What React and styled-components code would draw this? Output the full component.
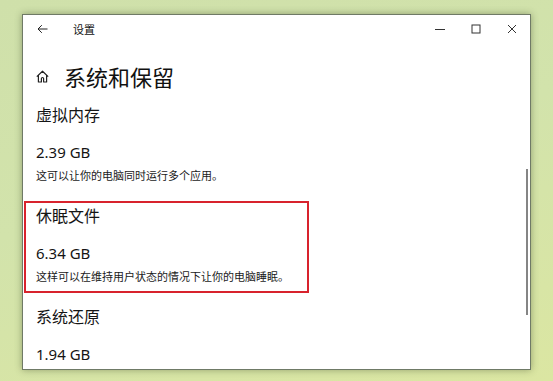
import React from "react"
import styled, { createGlobalStyle } from "styled-components"

const GlobalStyle = createGlobalStyle`
  html, body { margin: 0; padding: 0; }
  body {
    font-family: "Noto Sans", "Noto Sans CJK SC", sans-serif;
    color: #1b1b1b;
  }
`

const Desktop = styled.div`
  width: 553px;
  height: 381px;
  box-sizing: border-box;
  padding: 14px 0 0 22px;
  overflow: hidden;
  background: linear-gradient(165deg, #cfe0aa 0%, #d2e3ab 45%, #dbe6a2 100%);
`

const Window = styled.div`
  position: relative;
  width: 509px;
  height: 356px;
  box-sizing: border-box;
  border: 1px solid #6f7a66;
  background: #fff;
  box-shadow: 0 0 7px rgba(60, 70, 40, 0.45);
  display: flex;
  flex-direction: column;
  overflow: hidden;
`

const TitleBar = styled.div`
  height: 28px;
  flex-shrink: 0;
  display: flex;
  align-items: center;
  padding-left: 14px;
`

const BackBtn = styled.div`
  width: 11px;
  height: 10px;
  display: flex;
  color: #222;
`

const AppName = styled.span`
  margin-left: 25px;
  font-size: 11px;
  font-family: "Noto Sans CJK SC", sans-serif;
  color: #111;
`

const Controls = styled.div`
  margin-left: auto;
  display: flex;
  height: 100%;
`

const CtrlBtn = styled.div`
  width: 36px;
  height: 100%;
  display: flex;
  align-items: center;
  justify-content: center;
  color: #333;
`

const Header = styled.div`
  display: flex;
  align-items: center;
  margin-top: 18px;
  padding-left: 13px;
  height: 30px;
`

const HomeIcon = styled.div`
  width: 13px;
  height: 13px;
  display: flex;
  color: #222;
`

const PageTitle = styled.h1`
  margin: 0 0 0 15px;
  font-size: 22px;
  font-weight: 400;
  line-height: 30px;
  font-family: "Noto Sans CJK SC", sans-serif;
  color: #111;
`

const Sections = styled.div`
  margin-top: 9px;
  display: flex;
  flex-direction: column;
  gap: 9px;
`

const Section = styled.div`
  width: 285px;
  box-sizing: border-box;
  margin-left: 1px;
  padding: 1px 0 7px 10px;
  border: 2px solid ${(p) => (p.$highlight ? "#d8232d" : "transparent")};
`

const Heading = styled.div`
  font-size: 16px;
  line-height: 22px;
  font-family: "Noto Sans CJK SC", sans-serif;
  color: #151515;
`

const Value = styled.div`
  margin-top: 17px;
  font-size: 15px;
  line-height: 20px;
  color: #151515;
`

const Desc = styled.div`
  margin-top: 5px;
  font-size: 11px;
  line-height: 16px;
  font-family: "Noto Sans CJK SC", sans-serif;
  color: #1a1a1a;
  white-space: nowrap;
`

const ScrollThumb = styled.div`
  position: absolute;
  right: 2px;
  top: 154px;
  width: 2px;
  height: 146px;
  background: #858585;
`

const items = [
  { title: "虚拟内存", size: "2.39 GB", desc: "这可以让你的电脑同时运行多个应用。" },
  { title: "休眠文件", size: "6.34 GB", desc: "这样可以在维持用户状态的情况下让你的电脑睡眠。", highlight: true },
  { title: "系统还原", size: "1.94 GB" },
]

export default function App() {
  return (
    <>
      <GlobalStyle />
      <Desktop>
        <Window>
          <TitleBar>
            <BackBtn>
              <svg width="11" height="10" viewBox="0 0 11 10" fill="none" stroke="currentColor" strokeWidth="1">
                <path d="M10.5 5H1M4.8 1.2L1 5l3.8 3.8" />
              </svg>
            </BackBtn>
            <AppName>设置</AppName>
            <Controls>
              <CtrlBtn>
                <svg width="10" height="10" viewBox="0 0 10 10" stroke="currentColor" strokeWidth="1">
                  <path d="M0 5.5h10" />
                </svg>
              </CtrlBtn>
              <CtrlBtn>
                <svg width="10" height="10" viewBox="0 0 10 10" fill="none" stroke="currentColor" strokeWidth="1">
                  <rect x="1" y="1" width="8" height="8" />
                </svg>
              </CtrlBtn>
              <CtrlBtn>
                <svg width="10" height="10" viewBox="0 0 10 10" stroke="currentColor" strokeWidth="1">
                  <path d="M1 1l8 8M9 1L1 9" />
                </svg>
              </CtrlBtn>
            </Controls>
          </TitleBar>

          <Header>
            <HomeIcon>
              <svg width="13" height="13" viewBox="0 0 13 13" fill="none" stroke="currentColor" strokeWidth="1.2" strokeLinejoin="round">
                <path d="M0.8 6.6L6.5 1.2l5.7 5.4M2.4 5.2V12h3V8.6a1.1 1.1 0 0 1 2.2 0V12h3V5.2" />
              </svg>
            </HomeIcon>
            <PageTitle>系统和保留</PageTitle>
          </Header>

          <Sections>
            {items.map((it) => (
              <Section key={it.title} $highlight={it.highlight}>
                <Heading>{it.title}</Heading>
                <Value>{it.size}</Value>
                {it.desc && <Desc>{it.desc}</Desc>}
              </Section>
            ))}
          </Sections>

          <ScrollThumb />
        </Window>
      </Desktop>
    </>
  )
}
